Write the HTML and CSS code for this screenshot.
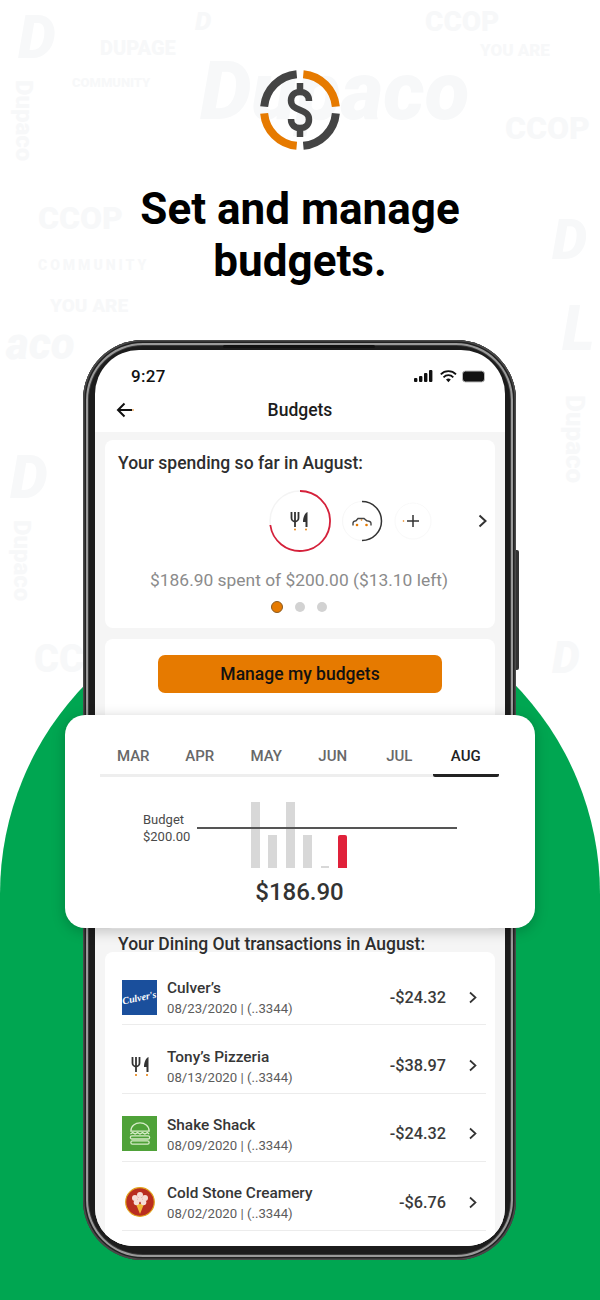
FILE: index.html
```html
<!DOCTYPE html>
<html lang="en">

<head>
    <meta charset="UTF-8">
    <meta name="viewport" content="width=device-width, initial-scale=1.0">
    <title>Set and manage budgets</title>

    <link rel="stylesheet" href="styles.css">
</head>

<body>

<div class="page">
    <!-- faint brand pattern behind everything -->
    <div class="pattern" aria-hidden="true">
        <span class="wm wm-d1">D</span>
        <span class="wm wm-d2">D</span>
        <span class="wm wm-brand">Dupaco</span>
        <span class="wm wm-coop1">CCOP</span>
        <span class="wm wm-coop3">CCOP</span>
        <span class="wm wm-coop4">CCOP</span>
        <span class="wm wm-cc">CC</span>
        <span class="wm wm-vert1">Dupaco</span>
        <span class="wm wm-vert2">Dupaco</span>
        <span class="wm wm-vert3">Dupaco</span>
        <span class="wm wm-aco">aco</span>
        <span class="wm wm-d3">D</span>
        <span class="wm wm-d4">D</span>
        <span class="wm wm-d5">D</span>
        <span class="wm wm-l">L</span>
        <span class="wm wm-small1">YOU ARE</span>
        <span class="wm wm-small2">YOU ARE</span>
        <span class="wm wm-small3">COMMUNITY</span>
        <span class="wm wm-small4">DUPAGE</span>
        <span class="wm wm-small5">COMMUNITY</span>
    </div>
    <div class="hill"></div>

    <header class="intro">
        <svg class="logo" viewBox="0 0 84 84" fill="none" stroke-width="8">
            <path stroke="#e67a00" d="M45.3 6.15A36 36 0 0 1 77.85 38.7"/>
            <path stroke="#444" d="M77.85 45.3A36 36 0 0 1 45.3 77.85"/>
            <path stroke="#e67a00" d="M38.7 77.85A36 36 0 0 1 6.15 45.3"/>
            <path stroke="#444" d="M6.15 38.7A36 36 0 0 1 38.7 6.15"/>
            <path stroke="#444" stroke-width="6.5" d="M42 15V25M42 59V69M51 33C51 27 47 24 42 24C36 24 33 28 33 32.5C33 38 37 40 42 42C47 44 51 46 51 51.5C51 56 48 60 42 60C37 60 33 57 33 51"/>
        </svg>
        <h1>Set and manage<br>budgets.</h1>
    </header>

    <div class="phone">
        <div class="speaker"></div>
        <div class="side-button"></div>
        <div class="screen">
            <div class="status">
                <span class="time">9:27</span>
                <svg class="status-icons" width="72" height="14" viewBox="0 0 72 14">
                    <g fill="#111">
                        <rect x="0" y="9" width="3.4" height="4" rx="1"/>
                        <rect x="5" y="7" width="3.4" height="6" rx="1"/>
                        <rect x="10" y="4" width="3.4" height="9" rx="1"/>
                        <rect x="15" y="1" width="3.4" height="12" rx="1"/>
                        <path d="M32 10.6l2.4 2.6 2.4-2.6a3.4 3.4 0 0 0-4.800 0z"/>
                    </g>
                    <g fill="none" stroke="#111" stroke-width="1.800">
                        <path d="M29.500 8.300a6.800 6.800 0 0 1 9.800 0"/>
                        <path d="M26.800 5.400a10.600 10.600 0 0 1 15.200 0"/>
                    </g>
                    <rect x="48.500" y="2" width="22" height="11" rx="3" fill="#111" stroke="#bbb"/>
                </svg>
            </div>
            <div class="titlebar">
                <svg class="back" width="18" height="16" viewBox="0 0 18 16" fill="none">
                    <path d="M16 8H2M8.500 1.500L2 8l6.500 6.500" stroke="#111" stroke-width="2"/>
                    <circle cx="17" cy="8" r=".8" fill="#e67a00"/>
                </svg>
                <span>Budgets</span>
            </div>

            <div class="content">
                <section class="card spending">
                    <h3>Your spending so far in August:</h3>
                    <div class="rings">
                        <svg class="ring-big" width="64" height="64" viewBox="0 0 64 64" fill="none">
                            <circle cx="32" cy="32" r="30" stroke="#f4f4f4" stroke-width="1.500"/>
                            <path d="M32 2A30 30 0 1 1 2.300 36" stroke="#d5203a" stroke-width="1.800"/>
                            <path d="M23.500 23v6a3.500 3.500 0 0 0 7 0v-6M27 23v15" stroke="#333" stroke-width="1.800"/>
                            <path d="M39.500 23c-2.500 1-4.500 5-4.500 10h2.500v5h2z" fill="#333"/>
                            <circle cx="27" cy="40.500" r=".9" fill="#e67a00"/>
                            <circle cx="38" cy="40.500" r=".9" fill="#e67a00"/>
                        </svg>
                        <svg class="ring-mid" width="42" height="42" viewBox="0 0 42 42" fill="none">
                            <circle cx="21" cy="21" r="19.500" stroke="#f7f7f7"/>
                            <path d="M21 1.500A19.500 19.500 0 0 1 21 40.500" stroke="#333" stroke-width="1.500"/>
                            <path d="M12 25.500v-2.500c0-1.500 2-2 3-2.200l2-2.300h6l2.800 2.300c2 .2 4.200.8 4.200 2.600v2.100" stroke="#444" stroke-width="1.400"/>
                            <circle cx="16" cy="25" r="1.300" fill="#e67a00"/>
                            <circle cx="25.500" cy="25" r="1.300" fill="#e67a00"/>
                            <circle cx="20.500" cy="20" r=".8" fill="#e67a00"/>
                        </svg>
                        <svg class="ring-add" width="38" height="38" viewBox="0 0 38 38" fill="none">
                            <circle cx="19" cy="19" r="18" stroke="#f9f9f9"/>
                            <path d="M19 13v12M13 19h12" stroke="#333" stroke-width="1.500"/>
                            <circle cx="9.500" cy="19" r=".8" fill="#e67a00"/>
                        </svg>
                        <svg class="next" width="11" height="14" viewBox="0 0 11 14" fill="none">
                            <path d="M2.500 1.500L8.500 7l-6 5.500" stroke="#333" stroke-width="2"/>
                        </svg>
                    </div>
                    <p class="spent">$186.90 spent of $200.00 ($13.10 left)</p>
                    <div class="dots">
                        <span class="dot dot-on"></span>
                        <span class="dot"></span>
                        <span class="dot"></span>
                    </div>
                </section>

                <section class="card manage">
                    <button type="button" class="manage-btn">Manage my budgets</button>
                </section>

                <h3 class="list-title">Your Dining Out transactions in August:</h3>

                <section class="card list">
                    <div class="row">
                        <div class="brand culvers"><span>Culver's</span></div>
                        <div class="row-text">
                            <div class="name">Culver’s</div>
                            <div class="date">08/23/2020 | (..3344)</div>
                        </div>
                        <div class="amount">-$24.32</div>
                        <svg class="chev" width="10" height="13" viewBox="0 0 10 13" fill="none"><path d="M2 1.500l5.500 5-5.500 5" stroke="#333" stroke-width="1.700"/></svg>
                    </div>
                    <div class="row">
                        <div class="brand">
                            <svg width="20" height="24" viewBox="0 0 20 24" fill="none">
                                <path d="M2.500 3v6a3.500 3.500 0 0 0 7 0V3M6 3v15" stroke="#333" stroke-width="1.800"/>
                                <path d="M18.500 3c-2.500 1-4.500 5-4.500 10h2.500v5h2z" fill="#333"/>
                                <circle cx="6" cy="21" r="1" fill="#e67a00"/>
                                <circle cx="17" cy="21" r="1" fill="#e67a00"/>
                            </svg>
                        </div>
                        <div class="row-text">
                            <div class="name">Tony’s Pizzeria</div>
                            <div class="date">08/13/2020 | (..3344)</div>
                        </div>
                        <div class="amount">-$38.97</div>
                        <svg class="chev" width="10" height="13" viewBox="0 0 10 13" fill="none"><path d="M2 1.500l5.500 5-5.500 5" stroke="#333" stroke-width="1.700"/></svg>
                    </div>
                    <div class="row">
                        <div class="brand shack">
                            <svg width="22" height="25" viewBox="0 0 24 25" fill="none" stroke="#d7ecc8" stroke-width="1.400">
                                <path d="M2 10c0-6 5-9 10-9s10 3 10 9z"/>
                                <path d="M1.500 13l2.500-1.500 2.700 1.500 2.600-1.500 2.700 1.500 2.700-1.500 2.600 1.500 2.700-1.500 2 1.500"/>
                                <rect x="1.500" y="15" width="21" height="3.500" rx="1.700"/>
                                <rect x="2" y="20.500" width="20" height="3.500" rx="1.700"/>
                            </svg>
                        </div>
                        <div class="row-text">
                            <div class="name">Shake Shack</div>
                            <div class="date">08/09/2020 | (..3344)</div>
                        </div>
                        <div class="amount">-$24.32</div>
                        <svg class="chev" width="10" height="13" viewBox="0 0 10 13" fill="none"><path d="M2 1.500l5.500 5-5.500 5" stroke="#333" stroke-width="1.700"/></svg>
                    </div>
                    <div class="row">
                        <div class="brand">
                            <svg width="30" height="30" viewBox="0 0 30 30">
                                <circle cx="15" cy="15" r="14.300" fill="#b92d20" stroke="#e0a21c" stroke-width="1.200"/>
                                <path d="M11 17l4 10 4-10z" fill="#f0b93a"/>
                                <g fill="#f6dcd6">
                                    <circle cx="15" cy="8" r="3"/>
                                    <circle cx="10" cy="11" r="3"/>
                                    <circle cx="20" cy="11" r="3"/>
                                    <circle cx="11.500" cy="15.500" r="2.800"/>
                                    <circle cx="18.500" cy="15.500" r="2.800"/>
                                    <circle cx="15" cy="12.500" r="2.500"/>
                                </g>
                            </svg>
                        </div>
                        <div class="row-text">
                            <div class="name">Cold Stone Creamery</div>
                            <div class="date">08/02/2020 | (..3344)</div>
                        </div>
                        <div class="amount">-$6.76</div>
                        <svg class="chev" width="10" height="13" viewBox="0 0 10 13" fill="none"><path d="M2 1.500l5.500 5-5.500 5" stroke="#333" stroke-width="1.700"/></svg>
                    </div>
                </section>
            </div>
        </div>
    </div>

    <!-- chart card sits on top of the phone -->
    <div class="chart-card">
        <div class="tabs">
            <span class="tab">MAR</span>
            <span class="tab">APR</span>
            <span class="tab">MAY</span>
            <span class="tab">JUN</span>
            <span class="tab">JUL</span>
            <span class="tab tab-on">AUG</span>
        </div>
        <div class="chart">
            <div class="budget-label">Budget<br>$200.00</div>
            <div class="plot">
                <div class="budget-line"></div>
                <div class="bar bar-full"></div>
                <div class="bar bar-half"></div>
                <div class="bar bar-full"></div>
                <div class="bar bar-half"></div>
                <div class="bar bar-tiny"></div>
                <div class="bar bar-half bar-now"></div>
            </div>
        </div>
        <div class="chart-total">$186.90</div>
    </div>
</div>

</body>
</html>
```

FILE: styles.css
```css
* {
    box-sizing: border-box;
}

body {
    margin: 0;
    font-family: Roboto, "Liberation Sans", sans-serif;
    background: #ffffff;
}

.page {
    position: relative;
    width: 600px;
    height: 1300px;
    overflow: hidden;
    background: #ffffff;
}

/* background pattern */
.pattern {
    position: absolute;
    inset: 0;
}

.wm {
    position: absolute;
    color: #f7f8f9;
    font-weight: 900;
    line-height: 1;
    white-space: nowrap;
}

.wm-d1 { left: 18px; top: 8px; font-size: 60px; font-style: italic; }
.wm-d2 { left: 195px; top: 8px; font-size: 26px; font-style: italic; }
.wm-brand { left: 200px; top: 50px; font-size: 82px; font-style: italic; }
.wm-coop1 { left: 38px; top: 202px; font-size: 32px; }
.wm-coop3 { left: 425px; top: 8px; font-size: 28px; }
.wm-coop4 { left: 505px; top: 112px; font-size: 32px; }
.wm-cc { left: 34px; top: 640px; font-size: 38px; }
.wm-vert1 { left: 12px; top: 80px; font-size: 24px; writing-mode: vertical-rl; }
.wm-vert2 { left: 562px; top: 395px; font-size: 26px; writing-mode: vertical-rl; }
.wm-vert3 { left: 10px; top: 520px; font-size: 24px; writing-mode: vertical-rl; }
.wm-aco { left: 6px; top: 322px; font-size: 44px; font-style: italic; }
.wm-d3 { left: 10px; top: 448px; font-size: 60px; font-style: italic; }
.wm-d4 { left: 552px; top: 212px; font-size: 56px; font-style: italic; }
.wm-d5 { left: 552px; top: 636px; font-size: 44px; font-style: italic; }
.wm-l { left: 562px; top: 298px; font-size: 62px; font-style: italic; }
.wm-small1 { left: 50px; top: 296px; font-size: 19px; }
.wm-small2 { left: 480px; top: 42px; font-size: 17px; }
.wm-small3 { left: 72px; top: 76px; font-size: 13px; }
.wm-small4 { left: 100px; top: 38px; font-size: 20px; }
.wm-small5 { left: 38px; top: 258px; font-size: 14px; letter-spacing: 3px; }

.hill {
    position: absolute;
    left: 0;
    right: 0;
    top: 594px;
    bottom: 0;
    background: #00a651;
    border-radius: 300px 300px 0 0;
}

/* heading */
.intro {
    position: relative;
    padding-top: 68px;
    text-align: center;
}

.logo {
    display: block;
    width: 84px;
    height: 84px;
    margin: 0 auto;
}

h1 {
    margin: 31px 0 0;
    font-size: 44px;
    font-weight: 700;
    line-height: 52px;
    color: #000000;
}

/* phone */
.phone {
    position: relative;
    width: 433px;
    height: 920px;
    margin: 53px 0 0 83px;
    padding: 10px 11px 14px 12px;
    background: #1c1c1c;
    border-radius: 60px;
    box-shadow: inset 0 0 0 1.500px #4a4a4a, inset 0 0 0 3px #222222, inset 0 0 0 5px #9a9a9a, inset 0 0 0 6px #3a3a3a;
}

.speaker {
    position: absolute;
    left: 140px;
    top: 5px;
    width: 152px;
    height: 3px;
    background: #111111;
    border-radius: 2px;
}

.side-button {
    position: absolute;
    left: 433px;
    top: 210px;
    width: 3px;
    height: 120px;
    background: #333333;
    border-radius: 0 2px 2px 0;
}

.screen {
    height: 100%;
    overflow: hidden;
    background: #ffffff;
    border-radius: 44px 44px 38px 38px;
}

.status {
    display: flex;
    align-items: center;
    justify-content: space-between;
    height: 41px;
    padding: 10px 19px 0 36px;
}

.time {
    font-size: 17px;
    font-weight: 500;
    letter-spacing: .3px;
    color: #111111;
}

.status-icons {
    display: block;
}

.titlebar {
    position: relative;
    display: flex;
    align-items: center;
    justify-content: center;
    height: 41px;
    padding-bottom: 4px;
    font-size: 17.500px;
    font-weight: 500;
    color: #1c1c1c;
}

.back {
    position: absolute;
    left: 21px;
    top: 11px;
}

.content {
    height: 814px;
    padding: 8px 10px 0;
    background: #f5f5f5;
}

.card {
    background: #ffffff;
    border-radius: 8px;
}

/* spending card */
.spending {
    height: 188px;
    padding: 13px 13px 0;
}

.spending h3,
.list-title {
    margin: 0;
    font-size: 17.500px;
    font-weight: 500;
    line-height: 20px;
    color: #2e2e2e;
}

.rings {
    position: relative;
    display: flex;
    align-items: center;
    height: 64px;
    margin-top: 16px;
    padding-left: 150px;
}

.ring-mid {
    margin-left: 9px;
}

.ring-add {
    margin-left: 11px;
}

.next {
    position: absolute;
    right: -6px;
    top: 25px;
}

.spent {
    margin: 17px 0 0 -2px;
    font-size: 17.400px;
    line-height: 20px;
    text-align: center;
    color: #8b8b8b;
}

.dots {
    display: flex;
    align-items: center;
    justify-content: center;
    gap: 12px;
    margin-top: 11px;
    margin-left: -2px;
}

.dot {
    width: 10px;
    height: 10px;
    background: #d2d2d2;
    border-radius: 50%;
}

.dot-on {
    width: 12px;
    height: 12px;
    background: #e67a00;
    border: 1px solid #8a5a20;
}

/* manage card */
.manage {
    height: 290px;
    margin-top: 11px;
    padding-top: 16px;
    text-align: center;
}

.manage-btn {
    width: 284px;
    height: 38px;
    border: none;
    border-radius: 7px;
    font-family: inherit;
    font-size: 17.500px;
    font-weight: 500;
    color: #111111;
    background: #e67a00;
}

/* list */
.list-title {
    height: 23px;
    padding: 5px 0 0 13px;
    line-height: 20px;
}

.list {
    height: 300px;
    padding: 5px 9px 0 17px;
}

.row {
    display: flex;
    align-items: center;
    height: 68.400px;
    padding-top: 13px;
    border-bottom: 1px solid #ececec;
}

.brand {
    display: flex;
    align-items: center;
    justify-content: center;
    flex: none;
    width: 35px;
    height: 35px;
    margin-right: 10px;
}

.culvers {
    background: #1a4f9c;
    overflow: hidden;
}

.culvers span {
    font-family: "Liberation Serif", serif;
    font-size: 10px;
    font-style: italic;
    font-weight: 700;
    color: #ffffff;
    transform: rotate(-12deg);
}

.shack {
    background: #4fa239;
}

.row-text {
    flex: 1;
    padding-top: 3px;
}

.name {
    font-size: 15.400px;
    font-weight: 500;
    line-height: 18px;
    color: #363636;
}

.date {
    margin-top: 3px;
    font-size: 13.200px;
    line-height: 18px;
    color: #5c5c5c;
}

.amount {
    font-size: 16.300px;
    font-weight: 500;
    color: #3a3a3a;
}

.chev {
    flex: none;
    margin: 0 8px 0 22px;
}

/* floating chart card */
.chart-card {
    position: absolute;
    left: 65px;
    top: 715px;
    width: 470px;
    height: 213px;
    padding: 22px 36px 0 35px;
    background: #ffffff;
    border-radius: 20px;
    box-shadow: 0 3px 14px rgba(0, 0, 0, .22);
}

.tabs {
    display: flex;
    height: 40px;
    border-bottom: 3px solid #eeeeee;
}

.tab {
    flex: 1;
    height: 40px;
    padding-top: 10px;
    font-size: 15px;
    font-weight: 500;
    line-height: 18px;
    text-align: center;
    color: #686868;
}

.tab-on {
    color: #222222;
    border-bottom: 3px solid #222222;
    border-radius: 2px;
}

.chart {
    display: flex;
    margin-top: 25px;
    padding-left: 43px;
}

.budget-label {
    width: 54px;
    padding-top: 9px;
    font-size: 13px;
    line-height: 17px;
    color: #4a4a4a;
}

.plot {
    position: relative;
    display: flex;
    align-items: flex-end;
    gap: 8.600px;
    width: 260px;
    height: 66px;
    padding-left: 54px;
}

.budget-line {
    position: absolute;
    left: 0;
    right: 0;
    top: 25px;
    height: 1.500px;
    background: #555555;
}

.bar {
    width: 8.800px;
    background: #d8d8d8;
}

.bar-full {
    height: 66px;
}

.bar-half {
    height: 33px;
}

.bar-tiny {
    height: 2px;
}

.bar-now {
    background: #e0213a;
    border-radius: 2px 2px 0 0;
}

.chart-total {
    margin-top: 9px;
    font-size: 24px;
    font-weight: 500;
    line-height: 30px;
    text-align: center;
    color: #333333;
}
```
